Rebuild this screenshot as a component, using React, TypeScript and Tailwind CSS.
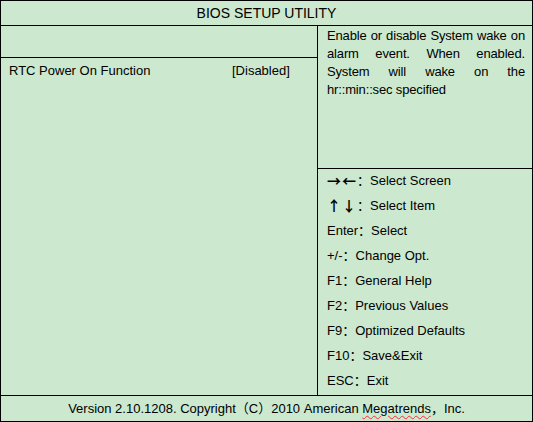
const keys: [string, string][] = [
  ["→←", "Select Screen"],
  ["↑↓", "Select Item"],
  ["Enter", "Select"],
  ["+/-", "Change Opt."],
  ["F1", "General Help"],
  ["F2", "Previous Values"],
  ["F9", "Optimized Defaults"],
  ["F10", "Save&Exit"],
  ["ESC", "Exit"],
]

const arrows = new Set(["→←", "↑↓"])

export default function App() {
  return (
    <div
      className="w-[533px] h-[422px] bg-[#cce8cf] text-black text-[13px] flex flex-col border border-black"
      style={{ fontFamily: '"Liberation Sans", Arial, "Noto Sans CJK SC", sans-serif' }}
    >
      <div className="h-[25px] shrink-0 flex items-center justify-center text-[14px] border-b border-black">
        BIOS SETUP UTILITY
      </div>

      <div className="flex flex-1 min-h-0">
        <div className="w-[317px] shrink-0 flex flex-col border-r border-black">
          <div className="h-[32px] shrink-0 border-b border-black" />
          <div className="flex-1 grid grid-cols-[223px_1fr] pl-[8px] pt-[3px] content-start">
            <span>RTC Power On Function</span>
            <span>[Disabled]</span>
          </div>
        </div>

        <div className="flex-1 flex flex-col">
          <div className="h-[143px] shrink-0 border-b border-black pl-[9px] pr-[7px] pt-[1px] leading-[18px] text-justify tracking-[-0.15px]">
            Enable or disable System wake on alarm event. When enabled. System will wake on the hr::min::sec specified
          </div>
          <div className="flex-1 flex flex-col pl-[9px]">
            {keys.map(([k, v]) => (
              <div key={k} className="h-[25px] pb-[2px] flex items-center">
                {arrows.has(k) ? (
                  <span className="font-bold text-[14px] tracking-[1px]" style={{ fontFamily: '"Noto Sans CJK SC", sans-serif' }}>
                    {k}
                  </span>
                ) : (
                  <span>{k}</span>
                )}
                <span>：</span>
                <span>{v}</span>
              </div>
            ))}
          </div>
        </div>
      </div>

      <div className="h-[26px] shrink-0 border-t border-black flex items-center justify-center">
        <span>
          Version 2.10.1208. Copyright（C）2010 American{" "}
          <span className="underline decoration-wavy decoration-red-500 decoration-1 underline-offset-2">Megatrends</span>，Inc.
        </span>
      </div>
    </div>
  )
}
